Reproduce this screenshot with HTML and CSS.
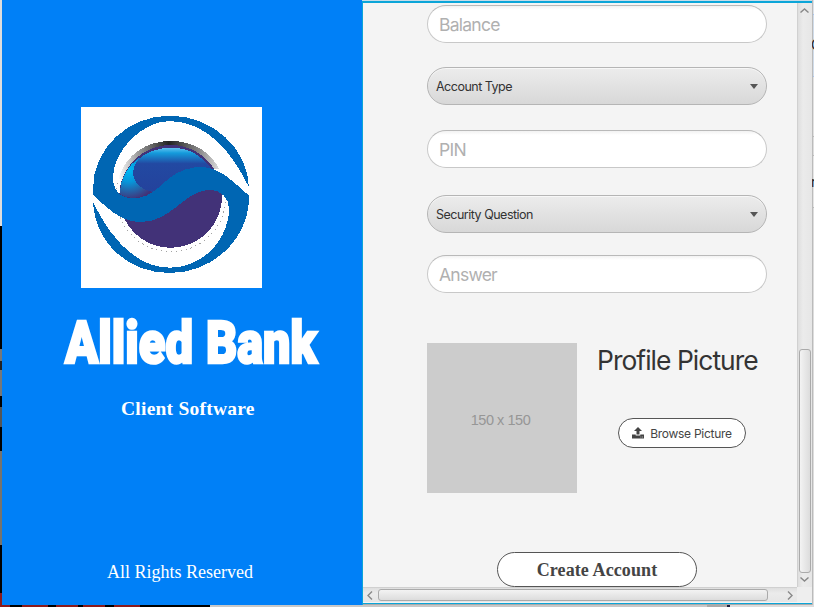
FILE: index.html
```html
<!DOCTYPE html>
<html lang="en">
<head>
<meta charset="utf-8">
<title>Allied Bank</title>
<link rel="stylesheet" href="styles.css">
</head>
<body>
<div class="desktop">
  <div class="edge-left"></div>
  <aside class="brand">
    <svg class="logo" viewBox="3 21 543 543">
      <defs>
        <linearGradient id="glow" x1="0" y1="0" x2="0" y2="1">
          <stop offset="0" stop-color="#64c4f0"/><stop offset=".12" stop-color="#149bdc"/><stop offset=".36" stop-color="#2249a2"/><stop offset="1" stop-color="#24429c"/>
        </linearGradient>
        <radialGradient id="shine" gradientUnits="userSpaceOnUse" cx="146" cy="210" r="90">
          <stop offset="0" stop-color="#00b8f4"/><stop offset=".4" stop-color="#0796da"/><stop offset="1" stop-color="#423278"/>
        </radialGradient>
        <linearGradient id="rim" x1="0" y1="0" x2="1" y2="0">
          <stop offset="0" stop-color="#fff"/><stop offset=".2" stop-color="#999"/><stop offset=".5" stop-color="#222"/><stop offset=".8" stop-color="#888"/><stop offset="1" stop-color="#ddd"/>
        </linearGradient>
      </defs>
      <path fill="#fff" d="M3 21h543v543H3z"/>
      <circle cx="273" cy="290" r="165" fill="none" stroke="#777" stroke-width="2" stroke-dasharray="4 11"/>
      <path fill="url(#rim)" d="M115 235C138 165 196 123 272 123C340 123 393 156 418 208L390 205C345 115 175 110 128 240Z"/>
      <circle cx="272" cy="289" r="154" fill="#423278"/>
      <path fill="url(#shine)" d="M119 282C121 235 142 197 177 174L166 235L216 276C186 292 149 303 119 282Z"/>
      <path fill="url(#glow)" d="M177 176C225 133 320 132 363 174Q382 187 392 204L260 255L216 276C155 260 145 215 177 176Z"/>
      <path fill="#0066b3" d="M39 278C33 150 141 47 270 47C400 47 504 148 507 262C455 156 383 66 270 63C185 62 91 160 99 244C103 285 139 300 176 294C244 281 256 214 345 202C415 193 454 242 507 287C510 412 402 519 270 519C141 519 45 425 39 306C85 402 160 503 270 503C370 503 447 417 447 325C446 292 419 264 379 270C307 281 272 366 182 366C119 366 76 318 39 284Z"/>
    </svg>
    <h1 class="name">
      <svg class="name-art" viewBox="0 0 260 60" role="img">
        <text x="2" y="52" textLength="128" lengthAdjust="spacingAndGlyphs">Allied</text>
        <text x="143" y="52" textLength="111" lengthAdjust="spacingAndGlyphs">Bank</text>
      </svg>
    </h1>
    <p class="subtitle">Client Software</p>
    <p class="rights">All Rights Reserved</p>
  </aside>
  <main class="window">
    <section class="form">
      <div class="field">Balance</div>
      <div class="combo combo-type"><span class="type-text">Account Type</span><i class="arrow"></i></div>
      <div class="field field-pin">PIN</div>
      <div class="combo combo-question"><span class="question-text">Security Question</span><i class="arrow"></i></div>
      <div class="field field-answer">Answer</div>
      <div class="profile">
        <div class="placeholder">150 x 150</div>
        <div class="profile-side">
          <h2>Profile Picture</h2>
          <button class="browse">
            <svg width="12" height="12" viewBox="0 0 12 12" fill="#444"><path d="M6 0L10 4H7.5V7.5H4.5V4H2Z"/><path d="M0 7.5H3.7V8.5H8.3V7.5H12V11.5H0Z"/><path fill="#aaa" d="M8.4 9.5h1v1h-1zm1.6 0h1v1h-1z"/></svg>
            <span>Browse Picture</span>
          </button>
        </div>
      </div>
      <button class="create">Create Account</button>
    </section>
    <div class="vbar">
      <svg width="9" height="5" viewBox="0 0 9 5"><path d="M.5 4.5L4.5 1L8.5 4.5"/></svg>
      <div class="vthumb"></div>
      <svg width="9" height="5" viewBox="0 0 9 5"><path d="M.5 .5L4.5 4L8.5 .5"/></svg>
    </div>
    <div class="hbar">
      <svg width="6" height="9" viewBox="0 0 6 9"><path d="M5 .5L1 4.5L5 8.5"/></svg>
      <div class="hthumb"></div>
      <svg width="6" height="9" viewBox="0 0 6 9"><path d="M1 .5L5 4.5L1 8.5"/></svg>
    </div>
    <div class="corner"></div>
  </main>
  <div class="edge-right"><span class="cut-c">C</span><span class="cut-r">r</span></div>
  <div class="edge-bottom"></div>
</div>
</body>
</html>
```
FILE: styles.css
```css
* { box-sizing: border-box; }
body { margin: 0; overflow: hidden; font-family: Inter, "Liberation Sans", sans-serif; }
h1, h2, p { margin: 0; font-weight: 400; }
button { font: inherit; padding: 0; }
.desktop { width: 814px; height: 607px; display: grid; grid-template-columns: 2px 360px 450px 2px; grid-template-rows: 605px 2px; overflow: hidden; background: #d8d8d8; }
.edge-left { background: linear-gradient(#ddd 0 226px, #000 226px 349px, #777 349px 361px, #222 361px 370px, #777 370px 396px, #000 396px 407px, #555 407px 427px, #000 427px 451px, #77736c 451px 545px, #000 545px 593px, #8b1a1c 593px); }
.brand { background: #0080f7; color: #fff; display: flex; flex-direction: column; font-family: "Liberation Serif", serif; }
.logo { width: 181px; height: 181px; margin: 107px 0 0 79px; flex: none; shape-rendering: crispEdges; }
.name { height: 60px; margin: 23px 0 0 61px; }
.name-art { display: block; width: 260px; height: 60px; overflow: visible; fill: #fff; stroke: #fff; stroke-width: 2.5px; stroke-linejoin: miter; font: 900 58.5px Roboto, sans-serif; }
.subtitle { margin: 26px 0 0 119px; font-size: 19.5px; line-height: 23px; font-weight: 700; letter-spacing: .24px; white-space: nowrap; }
.rights { margin: 141px 0 0 105px; font-size: 18px; line-height: 22px; white-space: nowrap; }
.window { display: grid; grid-template-columns: 434px 15px; grid-template-rows: 584px 15px 3px; height: 605px; border-top: 3px solid #0ba5d8; border-left: 1px solid #0ba5d8; background: linear-gradient(#f4f4f4 0 600px, #0ba5d8 600px 601px, #aaa 601px); border-image: linear-gradient(#c5dce9 0 1px, #0ba5d8 1px) 3 0 0 1; background-clip: padding-box; }
.form { padding: 2px 0 0 64px; overflow: hidden; }
.field { width: 340px; height: 38px; padding: 1px 12px 0 11px; border: 1px solid #c8c8c8; border-top-color: #b9b9b9; border-radius: 19px; background: linear-gradient(#f2f2f2, #fff 4px); color: #b0b0b0; font-size: 17.5px; line-height: 36px; letter-spacing: -.75px; }
.combo { width: 340px; height: 38px; padding: 0 8px; border: 1px solid #b5b5b5; border-radius: 19px; background: linear-gradient(#ececec, #d8d8d8); box-shadow: inset 0 1px #f7f7f7; color: #333; font-size: 12.5px; display: flex; justify-content: space-between; align-items: center; }
.combo-type { margin-top: 24px; }
.field-pin { margin-top: 25px; }
.combo-question { margin-top: 27px; }
.field-answer { margin-top: 22px; }
.type-text { letter-spacing: -.5px; }
.question-text { letter-spacing: -.5px; }
.arrow { border: 4.5px solid transparent; border-top: 5px solid #555; border-bottom: 0; }
.profile { display: flex; margin-top: 50px; }
.placeholder { width: 150px; height: 150px; background: #ccc; color: #969696; font: 14.5px/154px "Liberation Sans", sans-serif; letter-spacing: -.45px; text-align: center; padding-right: 3px; }
.profile-side { padding-left: 20px; }
h2 { font-size: 26.4px; line-height: 35px; height: 34px; letter-spacing: -.95px; color: #333; white-space: nowrap; }
.browse { display: flex; align-items: center; justify-content: center; gap: 6px; width: 128px; height: 30px; margin: 41px 0 0 21px; border: 1px solid #555; border-radius: 15px; background: #fff; color: #444; font-size: 12px; letter-spacing: -.27px; white-space: nowrap; }
.create { display: block; width: 200px; height: 35px; margin: 59px 0 0 70px; border: 1px solid #555; border-radius: 18px; background: #fff; color: #444; font: 700 18px "Liberation Serif", serif; letter-spacing: .1px; padding-top: 1px; }
.vbar { display: flex; flex-direction: column; align-items: center; background: linear-gradient(90deg, #dedede, #ebebeb 5px, #e6e6e6); border-left: 1px solid #d0d0d0; padding-top: 5px; }
.vbar svg, .hbar svg { fill: none; stroke: #888; stroke-width: 1.4px; flex: none; }
.vbar svg { margin-right: 1px; }
.vthumb { width: 12px; height: 224px; margin: 336px 1px 4px 0; border: 1px solid #aaa; border-radius: 3px; background: linear-gradient(90deg, #f3f3f3, #dcdcdc); }
.hbar { display: flex; align-items: center; background: linear-gradient(#dedede, #ebebeb 5px, #e6e6e6); border-top: 1px solid #d0d0d0; padding-left: 4px; }
.hthumb { width: 390px; height: 12px; margin: 0 19px 0 5px; border: 1px solid #aaa; border-radius: 3px; background: linear-gradient(#f3f3f3, #dcdcdc); }
.corner { background: #eee; }
.edge-right { position: relative; overflow: hidden; background: linear-gradient(90deg, #bbb 1px, transparent 1px), linear-gradient(#dce2e9 0 14px, #a9c5ef 14px 15px, #d0dcea 15px 76px, #a9c5ef 76px 77px, #e1e1e1 77px 136px, #bbb 136px 137px, #dedede 137px 155px, #bbb 155px 156px, #e5e5e5 156px 207px, #bbb 207px 208px, #ddd 208px); color: #222; font-size: 14px; }
.cut-c { position: absolute; top: 36px; left: -1px; }
.cut-r { position: absolute; top: 173px; left: -1px; }
.edge-bottom { grid-column: 1 / -1; background: linear-gradient(90deg, #8b1a1c 0 10px, #000 10px 22px, #8b1a1c 22px 48px, #000 48px 56px, #8b1a1c 56px 78px, #000 78px 83px, #8b1a1c 83px 105px, #000 105px 114px, #8b1a1c 114px 140px, #000 140px 170px, #000 170px 210px, #c8c8c8 210px 707px, #aaa 707px 727px, #202040 727px 730px, #ddd 730px); }
```
